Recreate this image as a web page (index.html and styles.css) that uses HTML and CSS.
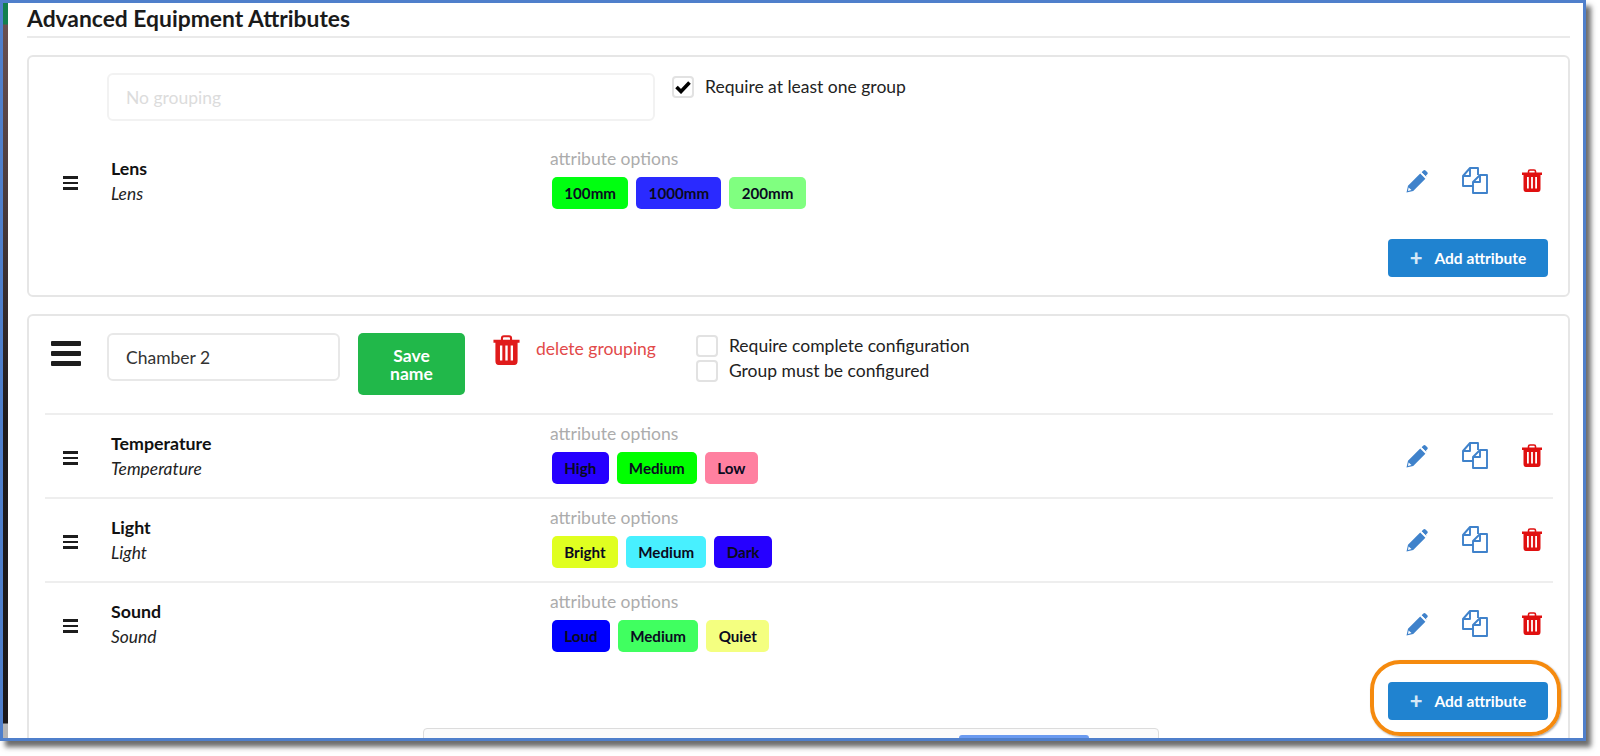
FILE: index.html
```html
<!DOCTYPE html>
<html lang="en">
<head>
<meta charset="utf-8">
<title>Advanced Equipment Attributes</title>
<link rel="stylesheet" href="styles.css">
</head>
<body>
<svg class="defs" width="0" height="0" aria-hidden="true">
  <symbol id="pencil" viewBox="0 0 22 24">
    <path d="M0.5 23.5 L2 16.8 L14.2 4.6 L19.4 9.8 L7.2 22 Z M2.6 18.4 L2 21.9 L5.5 21 Z" fill="#3f82cb" fill-rule="evenodd"/>
    <path d="M15.6 3.2 L17.4 1.4 Q18.4 0.5 19.5 1.4 L21.3 3.2 Q22.2 4.2 21.3 5.3 L19.8 6.8 L20.8 8.4 Z" fill="#3f82cb"/>
    <path d="M15.4 3.6 L20.6 8.7" stroke="#fff" stroke-width="0.8"/>
  </symbol>
  <symbol id="copy" viewBox="0 0 26 27">
    <g fill="none" stroke="#3f82cb" stroke-width="1.9" stroke-linejoin="round">
      <path d="M11 19 H1 V9 L8 1 H16 V8"/>
      <path d="M8 1 V9 H1"/>
      <path d="M18 8 H25 V26 H11 V15 Z"/>
      <path d="M18 8 V15 H11"/>
    </g>
  </symbol>
  <symbol id="trash" viewBox="0 0 20 23">
    <path d="M6.5 4 V2.6 Q6.5 1 8 1 H12 Q13.500 1 13.500 2.600 V4" fill="none" stroke="currentColor" stroke-width="1.6"/>
    <path d="M0 3.600 H20 V6 H18.500 V20 Q18.500 23 16 23 H4 Q1.500 23 1.500 20 V6 H0 Z" fill="currentColor"/>
    <path d="M5 8 H6.800 V19.500 H5 Z M9.100 8 H10.900 V19.500 H9.100 Z M13.200 8 H15 V19.500 H13.200 Z" fill="#fff"/>
  </symbol>
</svg>
<div class="frame">
  <div class="strip"></div>
  <main class="page">
    <h1 class="title">Advanced Equipment Attributes</h1>

    <section class="card">
      <div class="head head-plain">
        <input class="field field-wide" type="text" placeholder="No grouping" disabled>
        <div class="checks checks-top">
          <label class="check"><span class="box on"><svg viewBox="0 0 16 14" class="tick"><path d="M1.500 7 L6 11.500 L14.500 2.500" fill="none" stroke="#000" stroke-width="3.600"/></svg></span>Require at least one group</label>
        </div>
      </div>
      <div class="row row-first">
        <div class="grip"><i></i><i></i><i></i></div>
        <div class="names"><b>Lens</b><em>Lens</em></div>
        <div class="options">
          <div class="label">attribute options</div>
          <div class="chips">
            <span class="chip c-lime">100mm</span>
            <span class="chip c-indigo">1000mm</span>
            <span class="chip c-mint">200mm</span>
          </div>
        </div>
        <div class="actions">
          <svg class="ic-pencil"><use href="#pencil"/></svg>
          <svg class="ic-copy"><use href="#copy"/></svg>
          <svg class="ic-trash"><use href="#trash"/></svg>
        </div>
      </div>
      <div class="foot"><button class="add"><span class="plus">+</span>Add attribute</button></div>
    </section>

    <section class="card card-open">
      <div class="head">
        <div class="grip grip-big"><i></i><i></i><i></i></div>
        <input class="field field-name" type="text" value="Chamber 2">
        <button class="save">Save name</button>
        <svg class="ic-trash-big"><use href="#trash"/></svg>
        <span class="del">delete grouping</span>
        <div class="checks">
          <label class="check"><span class="box"></span>Require complete configuration</label>
          <label class="check"><span class="box"></span>Group must be configured</label>
        </div>
      </div>
      <div class="row">
        <div class="grip"><i></i><i></i><i></i></div>
        <div class="names"><b>Temperature</b><em>Temperature</em></div>
        <div class="options">
          <div class="label">attribute options</div>
          <div class="chips">
            <span class="chip c-blue">High</span>
            <span class="chip c-green">Medium</span>
            <span class="chip c-pink">Low</span>
          </div>
        </div>
        <div class="actions">
          <svg class="ic-pencil"><use href="#pencil"/></svg>
          <svg class="ic-copy"><use href="#copy"/></svg>
          <svg class="ic-trash"><use href="#trash"/></svg>
        </div>
      </div>
      <div class="row">
        <div class="grip"><i></i><i></i><i></i></div>
        <div class="names"><b>Light</b><em>Light</em></div>
        <div class="options">
          <div class="label">attribute options</div>
          <div class="chips">
            <span class="chip c-yellow">Bright</span>
            <span class="chip c-cyan">Medium</span>
            <span class="chip c-blue">Dark</span>
          </div>
        </div>
        <div class="actions">
          <svg class="ic-pencil"><use href="#pencil"/></svg>
          <svg class="ic-copy"><use href="#copy"/></svg>
          <svg class="ic-trash"><use href="#trash"/></svg>
        </div>
      </div>
      <div class="row">
        <div class="grip"><i></i><i></i><i></i></div>
        <div class="names"><b>Sound</b><em>Sound</em></div>
        <div class="options">
          <div class="label">attribute options</div>
          <div class="chips">
            <span class="chip c-pure">Loud</span>
            <span class="chip c-spring">Medium</span>
            <span class="chip c-pale">Quiet</span>
          </div>
        </div>
        <div class="actions">
          <svg class="ic-pencil"><use href="#pencil"/></svg>
          <svg class="ic-copy"><use href="#copy"/></svg>
          <svg class="ic-trash"><use href="#trash"/></svg>
        </div>
      </div>
      <div class="foot"><button class="add"><span class="plus">+</span>Add attribute</button></div>
    </section>
  </main>
  <div class="ring"></div>
  <div class="float"><div class="float-tab"></div></div>
</div>
</body>
</html>
```
FILE: styles.css
```css
* { box-sizing: border-box; }
html, body { margin: 0; padding: 0; background: #fff; height: 100%; overflow: hidden; }
body { font-family: Lato, "Liberation Sans", sans-serif; color: #111; }
.defs { position: absolute; }

.frame {
  position: relative;
  display: flex;
  width: 1586px;
  height: 741px;
  border: 3px solid #4f7fcb;
  background: #fff;
  overflow: hidden;
  box-shadow: 5px 6px 5px rgba(60, 60, 60, .75);
}
.strip {
  flex: none;
  width: 5px;
  background: linear-gradient(#13804f 0, #13804f 21px, #6a5050 22px, #4a3a3a 200px, #1f1a1a 420px, #1c1818 720px, #b5b5b5 721px);
}
.page { flex: 1; padding: 0 13px 0 19px; min-width: 0; }

.title {
  margin: 0 0 17px;
  height: 35px;
  padding-top: 1px;
  font-size: 22.850px;
  line-height: 28px;
  font-weight: 700;
  color: #1a1a1a;
  border-bottom: 2px solid #eaeaea;
}

.card {
  border: 2px solid #e6e6e6;
  border-radius: 6px;
  padding: 16px 15px 19px 16px;
  margin-bottom: 17px;
  height: 242px;
}
.card-open { height: 500px; margin-bottom: 0; }

.head { display: flex; align-items: flex-start; height: 81px; }
.head-plain { height: 65px; padding-left: 62px; }

.field {
  height: 48px;
  margin-top: 0;
  border: 2px solid #e8e8e8;
  border-radius: 6px;
  padding: 0 17px;
  font: 17.500px Lato, sans-serif;
  color: #333;
  background: #fff;
}
.field-wide { width: 548px; border-color: #f2f2f2; }
.field-wide::placeholder { color: #dcdcdc; opacity: 1; }
.field-name { width: 233px; margin-top: 1px; }

.save {
  width: 107px;
  height: 62px;
  margin: 1px 0 0 18px;
  border: 0;
  border-radius: 5px;
  padding: 1px 16px 0;
  background: #21b84a;
  color: #fff;
  font: 700 17.500px/18px Lato, sans-serif;
}
.ic-trash-big { width: 27px; height: 30px; margin: 3px 0 0 28px; color: #e01b1b; }
.del { margin: 5px 0 0 16px; font-size: 17.500px; line-height: 24px; color: #e24a4a; }

.checks { display: flex; flex-direction: column; gap: 4px; margin: 3px 0 0 40px; }
.checks-top { margin: 3px 0 0 17px; }
.check { display: flex; align-items: center; height: 21px; font-size: 17.500px; color: #222; }
.box {
  flex: none;
  width: 22px;
  height: 22px;
  margin-right: 11px;
  border: 2px solid #e2e2e2;
  border-radius: 4px;
  background: #fff;
  display: flex;
  align-items: center;
  justify-content: center;
}
.tick { width: 16px; height: 14px; }

.row {
  display: flex;
  align-items: flex-start;
  height: 84px;
  border-top: 2px solid #eee;
}
.row-first { border-top-color: transparent; }

.grip { display: flex; flex-direction: column; justify-content: space-between; flex: none; width: 15px; height: 14px; margin: 36px 0 0 18px; }
.grip i { display: block; height: 2.600px; background: #1d1d1d; }
.grip-big { width: 30px; height: 25px; margin: 9px 26px 0 6px; }
.grip-big i { height: 5px; border-radius: 1px; }

.names { flex: none; width: 439px; margin: 16px 0 0 33px; line-height: 25px; }
.names b { display: block; font-size: 17.800px; font-weight: 700; color: #111; }
.names em { display: block; font-size: 17.400px; font-style: italic; color: #222; }

.options { flex: none; }
.label { margin-top: 8px; font-size: 17.500px; line-height: 22px; color: #acacac; }
.chips { display: flex; gap: 8px; margin: 7px 0 0 2px; }
.chip {
  height: 32px;
  padding: 0 12.300px;
  border-radius: 5px;
  font-size: 15.150px;
  font-weight: 700;
  line-height: 32px;
  color: #0a0a20;
}
.c-lime { background: #00ff10; }
.c-indigo { background: #2a2aff; }
.c-mint { background: #80ff80; }
.c-blue { background: #2600ff; }
.c-green { background: #00ff00; }
.c-pink { background: #ff80a0; }
.c-yellow { background: #e0ff20; }
.c-cyan { background: #48f0ff; }
.c-pure { background: #0000ff; }
.c-spring { background: #40ff60; }
.c-pale { background: #f4ff80; }

.actions { display: flex; align-items: center; margin: 27px 11px 0 auto; }
.ic-pencil { width: 22px; height: 24px; }
.ic-copy { width: 26px; height: 27px; margin-left: 34px; }
.ic-trash { width: 20px; height: 23px; margin-left: 34px; color: #e01010; }

.foot { display: flex; justify-content: flex-end; padding-right: 5px; margin-top: 17px; }
.add {
  display: flex;
  align-items: center;
  justify-content: center;
  width: 160px;
  height: 38px;
  border: 0;
  border-radius: 4px;
  background: #2083d0;
  color: #fff;
  font: 700 15.500px Lato, sans-serif;
}
.plus { margin-right: 12px; font-size: 22px; font-weight: 900; line-height: 20px; color: #d6e8f6; }

.ring {
  position: absolute;
  left: 1367px;
  top: 657px;
  width: 191px;
  height: 76px;
  border: 4.500px solid #f58a0e;
  border-radius: 30px;
  box-shadow: 1px 1px 2px rgba(0, 0, 0, .35);
}
.float {
  position: absolute;
  left: 420px;
  top: 725px;
  width: 736px;
  height: 30px;
  border: 1px solid #dcdcdc;
  border-radius: 4px;
  background: #fbfbfb;
}
.float-tab {
  position: absolute;
  left: 535px;
  top: 6px;
  width: 130px;
  height: 20px;
  border-radius: 3px;
  background: #6a9af0;
}
```
